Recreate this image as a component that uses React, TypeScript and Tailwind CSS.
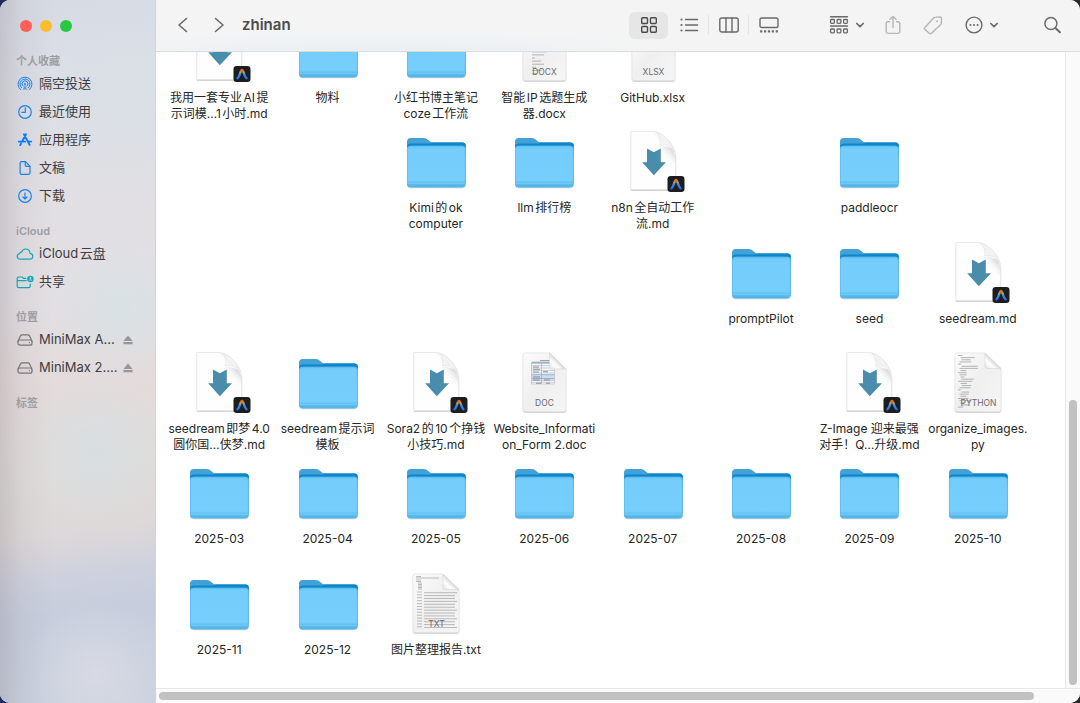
import type { ReactNode } from 'react';
import clsx from 'clsx';

type FileKind = 'folder' | 'md' | 'doc' | 'docx' | 'xlsx' | 'python' | 'txt';

interface FileItem {
  kind: FileKind;
  lines: string[];
}

const folder = (...lines: string[]): FileItem => ({ kind: 'folder', lines });
const file = (kind: FileKind, ...lines: string[]): FileItem => ({ kind, lines });

// null is an empty cell of the icon grid
const items: (FileItem | null)[] = [
  file('md', '我用一套专业AI提', '示词模…1小时.md'),
  folder('物料'),
  folder('小红书博主笔记', 'coze工作流'),
  file('docx', '智能IP选题生成', '器.docx'),
  file('xlsx', 'GitHub.xlsx'),
  null,
  null,
  null,

  null,
  null,
  folder('Kimi的ok', 'computer'),
  folder('llm排行榜'),
  file('md', 'n8n全自动工作', '流.md'),
  null,
  folder('paddleocr'),
  null,

  null,
  null,
  null,
  null,
  null,
  folder('promptPilot'),
  folder('seed'),
  file('md', 'seedream.md'),

  file('md', 'seedream即梦4.0', '圆你国…侠梦.md'),
  folder('seedream提示词', '模板'),
  file('md', 'Sora2的10个挣钱', '小技巧.md'),
  file('doc', 'Website_Informati', 'on_Form 2.doc'),
  null,
  null,
  file('md', 'Z-Image 迎来最强', '对手！Q…升级.md'),
  file('python', 'organize_images.', 'py'),

  folder('2025-03'),
  folder('2025-04'),
  folder('2025-05'),
  folder('2025-06'),
  folder('2025-07'),
  folder('2025-08'),
  folder('2025-09'),
  folder('2025-10'),

  folder('2025-11'),
  folder('2025-12'),
  file('txt', '图片整理报告.txt'),
];

function SharedDefs() {
  return (
    <svg className="absolute size-0" aria-hidden="true">
      <defs>
        <linearGradient id="front" x1="0" y1="0" x2="0" y2="1">
          <stop offset="0" stopColor="#6cc7f6" />
          <stop offset="0.08" stopColor="#74cdfb" />
          <stop offset="0.82" stopColor="#74cefb" />
          <stop offset="1" stopColor="#68c4f3" />
        </linearGradient>
        <linearGradient id="paper" x1="0" y1="0" x2="1" y2="1">
          <stop offset="0" stopColor="#fcfcfc" />
          <stop offset="0.5" stopColor="#efefef" />
          <stop offset="1" stopColor="#f6f6f6" />
        </linearGradient>
        <linearGradient id="fold" x1="0" y1="1" x2="1" y2="0">
          <stop offset="0" stopColor="#e2e2e2" />
          <stop offset="0.3" stopColor="#ffffff" />
          <stop offset="0.52" stopColor="#d6d6d6" />
        </linearGradient>
        <linearGradient id="curl" x1="0" y1="1" x2="1" y2="0">
          <stop offset="0.1" stopColor="#ffffff" />
          <stop offset="0.5" stopColor="#f1f1f1" />
          <stop offset="0.8" stopColor="#ffffff" />
        </linearGradient>
        <linearGradient id="curlShade" x1="0" y1="1" x2="1" y2="0">
          <stop offset="0.35" stopColor="#fff" stopOpacity="0" />
          <stop offset="0.85" stopColor="#b8b8b8" />
        </linearGradient>
        <linearGradient id="badge" x1="0" y1="0" x2="0" y2="1">
          <stop offset="0.05" stopColor="#e8623c" />
          <stop offset="0.3" stopColor="#9db356" />
          <stop offset="0.5" stopColor="#3f8fe0" />
          <stop offset="1" stopColor="#2f6ff0" />
        </linearGradient>
        <filter id="lift" x="-10%" y="-10%" width="120%" height="125%">
          <feDropShadow dx="0" dy="0.6" stdDeviation="0.6" floodOpacity="0.35" />
        </filter>
      </defs>
    </svg>
  );
}

function FolderIcon() {
  return (
    <svg viewBox="0 0 64 64" className="size-16">
      <g filter="url(#lift)">
        <path d="M3 13a4 4 0 0 1 4-4h12.500c2 0 3.200.7 4.700 2l1.800 1.500c1 .7 1.700.9 3 .9H58.500a3.200 3.200 0 0 1 3.200 3.200V53H3Z" fill="#43a2d8" />
        <path d="M3 18.500a4 4 0 0 1 4-4H26l3-1H58.500a3.200 3.200 0 0 1 3.200 3.200V26H3Z" fill="#0886cb" />
        <rect x="3" y="16.800" width="58.700" height="41.400" rx="3.600" fill="url(#front)" />
      </g>
      <path d="M3.200 55.200C3.600 57 4.800 58.200 6.600 58.200H58.100C59.900 58.200 61.100 57 61.500 55.200Z" fill="#55b7e9" />
      <path d="M3 53.200h58.700" stroke="#5fbcec" strokeWidth="0.700" />
      <rect x="3.400" y="17.200" width="57.900" height="40.600" rx="3.300" fill="none" stroke="#55b4e6" strokeWidth="0.600" />
    </svg>
  );
}

function MarkdownIcon() {
  return (
    <svg viewBox="0 0 64 64" className="size-16">
      <path d="M10 2.500H32C42 3 54.700 16 54.700 28V60.500H10Z" fill="#fefefe" stroke="#e2e2e2" strokeWidth="0.600" filter="url(#lift)" />
      <path d="M38.600 15.500L36 26L54.400 36V28C54 25 52.500 22 51 19.500Z" fill="url(#curlShade)" opacity="0.700" />
      <path d="M30 2.800C38 4 46 10 50 18L38.600 15.500Z" fill="url(#curlShade)" opacity="0.450" />
      <path d="M34.500 3C38 5.500 39.300 10.500 38.600 15.700C44 14.700 49.500 16.500 53.300 22.500C50 13.500 43.500 5.500 34.500 3Z" fill="url(#curl)" stroke="#dedede" strokeWidth="0.500" />
      <path d="M26 19.500l6.800 3.800 7-3.800v13.800h5.200L32.800 46.300 21.200 33.300H26Z" fill="#4a8cab" />
      <rect x="46.500" y="47" width="17" height="16" rx="3.200" fill="#1c1d1f" />
      <path d="M50.400 59.200C53 57.800 53.200 51 55 51S57 57.800 59.600 59.200" fill="none" stroke="url(#badge)" strokeWidth="2.300" strokeLinecap="round" />
    </svg>
  );
}

// line widths of the miniature page previews
const pythonLines = [7, 22, 14, 18, 5, 25, 28, 9, 13, 11, 6, 19, 22, 10, 15, 17, 4, 12, 14, 9, 16, 18, 6, 12, 8];
const docxLines = [12, 5, 13, 14, 3, 8, 12, 5, 15, 12, 3, 9, 12, 4, 10, 5];

function PaperIcon({ kind }: { kind: FileKind }) {
  const wide = kind === 'python' || kind === 'txt';
  const outline = wide
    ? 'M11 3H39L55 18.500V59.500a2 2 0 0 1-2 2H11a2 2 0 0 1-2-2V5a2 2 0 0 1 2-2Z'
    : 'M13 3H37.500L54 19V59.500a2 2 0 0 1-2 2H13a2 2 0 0 1-2-2V5a2 2 0 0 1 2-2Z';
  return (
    <svg viewBox="0 0 64 64" className="size-16">
      <path d={outline} fill="url(#paper)" stroke="#dcdcdc" strokeWidth="0.500" filter="url(#lift)" />
      {kind === 'doc' && (
        <g>
          <path d="M28 10.500h10M20 12.200h20" stroke="#8d8d8d" strokeWidth="0.800" />
          <rect x="19.500" y="13" width="23" height="21" fill="#f5f7f9" stroke="#9a9a9a" strokeWidth="0.400" />
          <path d="M19.500 12.800h23M19.500 24.800h23M19.500 28.500h23" stroke="#8fb1d6" strokeWidth="1.300" />
          <path d="M19.500 15.500h23M19.500 18h23M19.500 20.500h23M19.500 23h23M19.500 26.700h23M19.500 30.500h23M19.500 32.300h23" stroke="#a5abb2" strokeWidth="0.500" />
          <path d="M21 17h6M21 19.300h7M21 22h6M31 21.700h5M21 27h7M21 30h7M32 30h6M24 33.200h5M34 33.200h4" stroke="#666c73" strokeWidth="0.700" />
          <path d="M29.500 13v21" stroke="#9a9a9a" strokeWidth="0.500" />
        </g>
      )}
      {kind === 'python' &&
        pythonLines.map((w, i) => (
          <path
            key={i}
            d={`M${i % 4 === 0 ? 12 : 13.500 + (i % 3)} ${5.5 + i * 2.15}h${w * 0.65}`}
            stroke="#a2a2a2"
            strokeWidth="0.800"
          />
        ))}
      {kind === 'docx' &&
        docxLines.map((w, i) => (
          <path key={i} d={`M20 ${8 + i * 3.1}h${w}`} stroke="#999" strokeWidth="0.700" />
        ))}
      {kind === 'txt' && (
        <g stroke="#a0a0a0" strokeWidth="0.700">
          <path d="M12 5.500h5M12 7h23M12 9h5M12 10.500h5M14 12h4M14 13.500h4M14 15h4M14 16.500h4M14 18h4" />
          {Array.from({ length: 13 }, (_, i) => (
            <path key={i} d={`M13 ${21 + i * 2.9}h5M20 ${21.700 + i * 2.9}h${i % 3 ? 31 : 33}`} />
          ))}
        </g>
      )}
      {wide ? (
        <path d="M39 3V16.500a2 2 0 0 0 2 2H55Z" fill="url(#fold)" stroke="#d0d0d0" strokeWidth="0.500" />
      ) : (
        <path d="M37.500 3V17a2 2 0 0 0 2 2H54Z" fill="url(#fold)" stroke="#d0d0d0" strokeWidth="0.500" />
      )}
      <text x="32.500" y="56" textAnchor="middle" fontSize="8.500" fontFamily="Inter, sans-serif" fill="#6b6b6b">
        {kind.toUpperCase()}
      </text>
    </svg>
  );
}

function FileIcon({ kind }: { kind: FileKind }) {
  if (kind === 'folder') return <FolderIcon />;
  if (kind === 'md') return <MarkdownIcon />;
  return <PaperIcon kind={kind} />;
}

function FileCell({ item }: { item: FileItem }) {
  return (
    <button className="flex flex-col items-center gap-[7px]">
      <FileIcon kind={item.kind} />
      <span className="text-xs leading-4 whitespace-nowrap text-[#262626]">
        {item.lines.map((line) => (
          <span key={line} className="block">
            {line}
          </span>
        ))}
      </span>
    </button>
  );
}

function SideIcon({ children, className }: { children: ReactNode; className?: string }) {
  return (
    <svg
      viewBox="0 0 18 18"
      className={clsx('size-[18px] shrink-0', className)}
      fill="none"
      stroke="currentColor"
      strokeWidth="1.200"
      strokeLinecap="round"
      strokeLinejoin="round"
    >
      {children}
    </svg>
  );
}

const diskIcon = (
  <SideIcon className="text-[#77757a]">
    <path d="M2 10.200L4.400 5c.4-.8.900-1.100 1.700-1.100h5.800c.8 0 1.300.3 1.700 1.100L16 10.200" />
    <rect x="2" y="9" width="14" height="5.200" rx="2" />
    <path d="M13.400 11.600h.1" />
  </SideIcon>
);

const sections = [
  {
    title: '个人收藏',
    entries: [
      {
        label: '隔空投送',
        icon: (
          <SideIcon className="text-[#1a7ff5]">
            <path d="M4.600 14.600a7 7 0 1 1 8.800 0M5.600 12.700a5 5 0 1 1 6.800 0M6.900 11a3 3 0 1 1 4.200 0" strokeWidth="1" />
            <path d="M9 9.800L6.900 14.500h4.200Z" strokeWidth="0.300" fill="currentColor" opacity="0.600" />
            <circle cx="9" cy="9" r="1" fill="currentColor" stroke="none" />
          </SideIcon>
        ),
      },
      {
        label: '最近使用',
        icon: (
          <SideIcon className="text-[#1a7ff5]">
            <circle cx="9" cy="9" r="6.300" />
            <path d="M9.300 4.800V9.300H5.800" />
          </SideIcon>
        ),
      },
      {
        label: '应用程序',
        icon: (
          <SideIcon className="text-[#0a7aff]">
            <path d="M8 3.300l5.600 10.600M10 3.300L6.600 9.500M5 12.600l-.8 1.500M2.800 10.600h6.400M12.500 10.600h2.700" strokeWidth="1.900" />
          </SideIcon>
        ),
      },
      {
        label: '文稿',
        icon: (
          <SideIcon className="text-[#1a7ff5]">
            <path d="M9.500 2.700H5.700c-1 0-1.600.6-1.600 1.600v9.400c0 1 .6 1.600 1.600 1.600h6.700c1 0 1.600-.6 1.600-1.600V7.300Z" />
            <path d="M9.300 2.900v3.300c0 .8.500 1.200 1.200 1.200h3.300" />
          </SideIcon>
        ),
      },
      {
        label: '下载',
        icon: (
          <SideIcon className="text-[#1a7ff5]">
            <circle cx="9" cy="9" r="6.300" />
            <path d="M9 5.800v6M6.800 9.800L9 12l2.200-2.200" />
          </SideIcon>
        ),
      },
    ],
  },
  {
    title: 'iCloud',
    entries: [
      {
        label: 'iCloud云盘',
        icon: (
          <SideIcon className="text-[#12a5b8]">
            <path d="M4.500 14.200c-2 0-3.300-1.200-3.300-2.800 0-1.500 1-2.500 2.400-2.700.1-1 1-1.700 2.100-1.600C6.300 5 7.800 4 9.600 4c2.500 0 4.300 1.900 4.400 4.300 1.700.3 2.800 1.400 2.800 2.900 0 1.800-1.300 3-3.200 3Z" />
          </SideIcon>
        ),
      },
      {
        label: '共享',
        icon: (
          <SideIcon className="text-[#12a5b8]">
            <path d="M10 5.300H7.500L6.200 4H2.600C1.700 4 1.200 4.500 1.200 5.300v8c0 .8.500 1.300 1.400 1.300h10.200c.9 0 1.400-.5 1.400-1.300V11M1.400 7.600h8.800" />
            <circle cx="14.400" cy="6" r="3.200" fill="currentColor" stroke="none" />
            <circle cx="14.400" cy="5" r="0.900" fill="#e3dfe2" stroke="none" />
            <path d="M13 7.400c.5-.8 2.300-.8 2.800 0" stroke="#e3dfe2" strokeWidth="0.800" />
          </SideIcon>
        ),
      },
    ],
  },
  {
    title: '位置',
    entries: [
      { label: 'MiniMax A...', icon: diskIcon, eject: true },
      { label: 'MiniMax 2....', icon: diskIcon, eject: true },
    ],
  },
  { title: '标签', entries: [] },
];

function Sidebar() {
  return (
    <aside className="flex w-[156px] shrink-0 flex-col border-r border-[#d2d2d9] bg-[linear-gradient(90deg,rgba(120,110,115,0.22),rgba(120,110,115,0.07)_14%,rgba(120,110,115,0)_34%),radial-gradient(circle_at_62%_96%,rgba(217,219,228,0.9),rgba(217,219,228,0)_75px),radial-gradient(circle_at_62%_64%,rgba(214,223,226,0.85),rgba(214,223,226,0)_75px),radial-gradient(circle_at_78%_44%,rgba(214,226,230,0.8),rgba(214,226,230,0)_75px),radial-gradient(circle_at_80%_14%,rgba(217,224,230,0.8),rgba(217,224,230,0)_110px),linear-gradient(173deg,#d6dae4_0%,#dddfe6_14%,#e1dfe3_26%,#e3dfe3_42%,#e4dbdb_53%,#e0dcda_66%,#ddd8d9_75%,#ced1dd_81%,#c7cddd_86%,#cad1de_100%)]">
      <div className="flex gap-2 pt-5 pl-5">
        <button aria-label="关闭" className="size-3 rounded-full bg-[#fe5f57]" />
        <button aria-label="最小化" className="size-3 rounded-full bg-[#febc2e]" />
        <button aria-label="缩放" className="size-3 rounded-full bg-[#28c840]" />
      </div>
      <nav className="mt-5 flex flex-col gap-3">
        {sections.map((section) => (
          <section key={section.title}>
            <h2 className="pl-4 text-[11px] leading-[18px] font-semibold text-[#a09da3]">{section.title}</h2>
            {section.entries.map((entry) => (
              <div key={entry.label} className="flex h-7 items-center justify-between pr-[22px] pl-4">
                <button className="flex items-center gap-[5px] text-[13px] whitespace-nowrap text-[#3e3d41]">
                  {entry.icon}
                  {entry.label}
                </button>
                {'eject' in entry && (
                  <button aria-label="推出" className="text-[#98969b]">
                    <svg viewBox="0 0 10 10" className="size-[10px]" fill="currentColor">
                      <path d="M5 .5L9.600 6H.4ZM.4 7h9.200v2.300H.4Z" />
                    </svg>
                  </button>
                )}
              </div>
            ))}
          </section>
        ))}
      </nav>
    </aside>
  );
}

function ToolIcon({ children, className }: { children: ReactNode; className?: string }) {
  return (
    <svg
      viewBox="0 0 20 20"
      className={clsx('size-5 shrink-0', className)}
      fill="none"
      stroke="currentColor"
      strokeWidth="1.400"
      strokeLinecap="round"
      strokeLinejoin="round"
    >
      {children}
    </svg>
  );
}

function Chevron() {
  return (
    <svg viewBox="0 0 10 10" className="size-[10px]" fill="none" stroke="currentColor" strokeWidth="1.700" strokeLinecap="round" strokeLinejoin="round">
      <path d="M1.800 3.500L5 6.700l3.200-3.200" />
    </svg>
  );
}

const viewButton = 'flex h-[27px] w-[39px] items-center justify-center rounded-md';

function Toolbar() {
  return (
    <header className="flex h-[52px] shrink-0 items-center border-b border-[#dcdcdc] bg-[#f4f4f4] bg-[radial-gradient(ellipse_at_24%_100%,#e9eff3,rgba(244,244,244,0)_30%)] pr-4 pb-px pl-[17px] text-[#6a6a6a]">
      <div className="flex gap-4">
        <button aria-label="后退">
          <ToolIcon>
            <path d="M13.500 3.500L6 10l7.500 6.500" strokeWidth="1.600" />
          </ToolIcon>
        </button>
        <button aria-label="前进">
          <ToolIcon>
            <path d="M6.500 3.500L14 10l-7.500 6.500" strokeWidth="1.600" />
          </ToolIcon>
        </button>
      </div>
      <h1 className="pl-[13px] text-[15px] font-semibold text-[#4a4a4a]">zhinan</h1>

      <div className="ml-auto flex items-center gap-[41px]">
        <div className="flex items-center gap-px">
          <button aria-label="图标" className={clsx(viewButton, 'bg-[#e6e6e6] text-[#4a4a4a]')}>
            <ToolIcon>
              <rect x="2.700" y="2.700" width="5.800" height="5.800" rx="1" />
              <rect x="11.500" y="2.700" width="5.800" height="5.800" rx="1" />
              <rect x="2.700" y="11.500" width="5.800" height="5.800" rx="1" />
              <rect x="11.500" y="11.500" width="5.800" height="5.800" rx="1" />
            </ToolIcon>
          </button>
          <button aria-label="列表" className={viewButton}>
            <ToolIcon>
              <path d="M6.500 4.500h12M6.500 10h12M6.500 15.500h12" />
              <path d="M2.500 4.500h.01M2.500 10h.01M2.500 15.500h.01" strokeWidth="2.200" />
            </ToolIcon>
          </button>
          <div className="-mx-px h-5 w-px bg-[#e4e4e4]" />
          <button aria-label="分栏" className={viewButton}>
            <ToolIcon>
              <rect x="0.800" y="3" width="18.400" height="14" rx="2" />
              <path d="M7 3v14M13 3v14" />
            </ToolIcon>
          </button>
          <div className="-mx-px h-5 w-px bg-[#e4e4e4]" />
          <button aria-label="画廊" className={viewButton}>
            <ToolIcon>
              <rect x="1" y="3" width="18" height="9.500" rx="1.800" />
              <path d="M2.200 16.300h.01M6.100 16.300h.01M10 16.300h.01M13.900 16.300h.01M17.800 16.300h.01" strokeWidth="2.200" strokeLinecap="square" />
            </ToolIcon>
          </button>
        </div>

        <div className="flex items-center gap-4">
          <button aria-label="分组" className="flex w-9 items-center justify-between">
            <ToolIcon>
              <path d="M1.500 1.800h17M1.500 11h17" />
              <g strokeWidth="1.300">
                <rect x="1.600" y="4.500" width="3.800" height="3.800" rx="0.800" />
                <rect x="8.100" y="4.500" width="3.800" height="3.800" rx="0.800" />
                <rect x="14.600" y="4.500" width="3.800" height="3.800" rx="0.800" />
                <rect x="1.600" y="14" width="3.800" height="3.800" rx="0.800" />
                <rect x="8.100" y="14" width="3.800" height="3.800" rx="0.800" />
                <rect x="14.600" y="14" width="3.800" height="3.800" rx="0.800" />
              </g>
            </ToolIcon>
            <Chevron />
          </button>
          <button aria-label="共享" disabled className="flex w-6 justify-center text-[#b5b5b5]">
            <ToolIcon>
              <path d="M6.500 6.800H5A1.800 1.800 0 0 0 3.200 8.600v8A1.800 1.800 0 0 0 5 18.400h10a1.800 1.800 0 0 0 1.800-1.800v-8A1.800 1.800 0 0 0 15 6.800h-1.500M10 12.500V1.500M7 4.300l3-2.900 3 2.900" />
            </ToolIcon>
          </button>
          <button aria-label="标签" disabled className="flex w-6 justify-center text-[#b5b5b5]">
            <ToolIcon>
              <path d="M1.800 12.400L10.700 3c.5-.6 1.100-.9 1.900-.9l4.200-.1c1 0 1.700.7 1.700 1.700l-.1 4.100c0 .8-.3 1.400-.9 2l-9 8.500c-.7.700-1.500.7-2.200 0l-4.500-4c-.7-.6-.7-1.200 0-1.900Z" />
              <path d="M14 6.200h.01" strokeWidth="2" />
            </ToolIcon>
          </button>
          <button aria-label="操作" className="flex w-[38px] items-center justify-end gap-[5px]">
            <ToolIcon>
              <circle cx="10" cy="10" r="7.900" />
              <path d="M6.400 10h.01M10 10h.01M13.600 10h.01" strokeWidth="2" />
            </ToolIcon>
            <Chevron />
          </button>
        </div>

        <button aria-label="搜索" className="flex w-6 justify-center">
          <ToolIcon>
            <circle cx="8.900" cy="8.500" r="6" strokeWidth="1.500" />
            <path d="M13.400 13l4.500 4.300" strokeWidth="2" />
          </ToolIcon>
        </button>
      </div>
    </header>
  );
}

export default function App() {
  return (
    <div className="h-screen bg-[linear-gradient(90deg,#1d2a5c_0%,#2a2a2a_50%)]">
      <SharedDefs />
      <div className="flex h-full overflow-hidden rounded-[10px] bg-white font-[Inter,'Noto_Sans_CJK_SC',sans-serif] [text-autospace:normal]">
        <Sidebar />
        <div className="flex min-w-0 flex-1 flex-col">
          <Toolbar />
          <div className="flex min-h-0 flex-1">
            <main className="flex min-w-0 flex-1 flex-col justify-end overflow-hidden pr-[33px] pb-[7px] pl-[9px]">
              <div className="grid h-[662px] shrink-0 grid-cols-8 grid-rows-6 items-start">
                {items.map((item, i) => (item ? <FileCell key={i} item={item} /> : <div key={i} />))}
              </div>
            </main>
            <div className="flex w-[15px] flex-col items-center justify-end border-l border-[#e8e8e8] bg-[#fafafa] pb-[3px]">
              <div className="h-[45%] w-2 rounded-full bg-[#c1c1c1]" />
            </div>
          </div>
          <div className="flex h-[15px] shrink-0 items-center border-t border-[#e8e8e8] bg-[#fafafa] pl-[3px]">
            <div className="h-2 w-[95%] rounded-full bg-[#c1c1c1]" />
          </div>
        </div>
      </div>
    </div>
  );
}
